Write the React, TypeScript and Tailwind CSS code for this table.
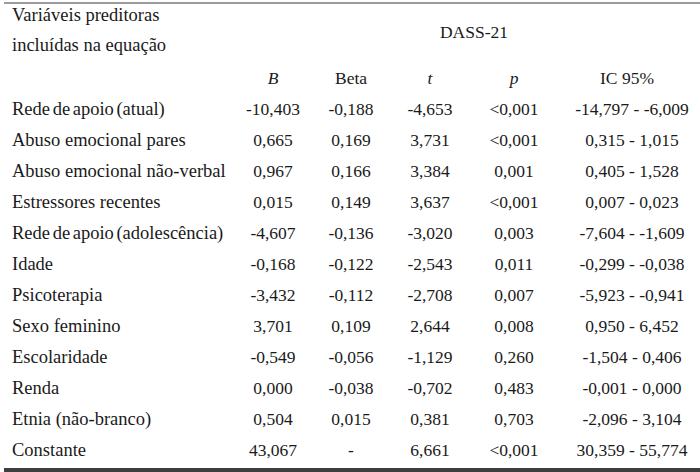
import React from "react";

const rows: [string, string, string, string, string, string][] = [
  ["Rede de apoio (atual)", "-10,403", "-0,188", "-4,653", "<0,001", "-14,797 - -6,009"],
  ["Abuso emocional pares", "0,665", "0,169", "3,731", "<0,001", "0,315 - 1,015"],
  ["Abuso emocional não-verbal", "0,967", "0,166", "3,384", "0,001", "0,405 - 1,528"],
  ["Estressores recentes", "0,015", "0,149", "3,637", "<0,001", "0,007 - 0,023"],
  ["Rede de apoio (adolescência)", "-4,607", "-0,136", "-3,020", "0,003", "-7,604 - -1,609"],
  ["Idade", "-0,168", "-0,122", "-2,543", "0,011", "-0,299 - -0,038"],
  ["Psicoterapia", "-3,432", "-0,112", "-2,708", "0,007", "-5,923 - -0,941"],
  ["Sexo feminino", "3,701", "0,109", "2,644", "0,008", "0,950 - 6,452"],
  ["Escolaridade", "-0,549", "-0,056", "-1,129", "0,260", "-1,504 - 0,406"],
  ["Renda", "0,000", "-0,038", "-0,702", "0,483", "-0,001 - 0,000"],
  ["Etnia (não-branco)", "0,504", "0,015", "0,381", "0,703", "-2,096 - 3,104"],
  ["Constante", "43,067", "-", "6,661", "<0,001", "30,359 - 55,774"],
];

const grid = "grid grid-cols-[230px_78px_78px_80px_88px_142px]";

function Label({ text }: { text: string }) {
  if (text.startsWith("Rede de apoio")) {
    return (
      <div className="pl-[8px] whitespace-nowrap text-[18.5px]">
        <span className="[word-spacing:-2px]">Rede de apoio </span>
        {text.slice("Rede de apoio ".length)}
      </div>
    );
  }
  return <div className="pl-[8px] whitespace-nowrap text-[18.5px]">{text}</div>;
}

export default function App() {
  return (
    <div className="w-[700px] h-[472px] bg-white pt-[2px] pl-[4px] text-[#1a1a1a] overflow-hidden font-['Liberation_Serif','Times_New_Roman',serif]">
      <div className="border-t-2 border-[#9c9c9c]">
        <div className={`${grid} h-[59px]`}>
          <div className="pl-[8px] -mt-[4px] text-[18.5px] leading-[30px]">
            <div>Variáveis preditoras</div>
            <div>incluídas na equação</div>
          </div>
          <div className="col-span-5 flex items-center justify-center pl-[14px] pb-[2px] text-[17.5px]">
            DASS-21
          </div>
        </div>
        <div className={`${grid} h-[31px] items-center text-[17.5px]`}>
          <div />
          <div className="text-center italic">B</div>
          <div className="text-center">Beta</div>
          <div className="text-center italic">t</div>
          <div className="text-center italic">p</div>
          <div className="text-center pr-[4px]">IC 95%</div>
        </div>
        {rows.map((r) => (
          <div key={r[0]} className={`${grid} h-[31px] items-center text-[17.5px]`}>
            <Label text={r[0]} />
            <div className="text-center">{r[1]}</div>
            <div className="text-center">{r[2]}</div>
            <div className="text-center">{r[3]}</div>
            <div className="text-center">{r[4]}</div>
            <div className="text-center pl-[6px]">{r[5]}</div>
          </div>
        ))}
      </div>
      <div className="mt-[2px] border-b-4 border-[#3e3e3e]" />
    </div>
  );
}
